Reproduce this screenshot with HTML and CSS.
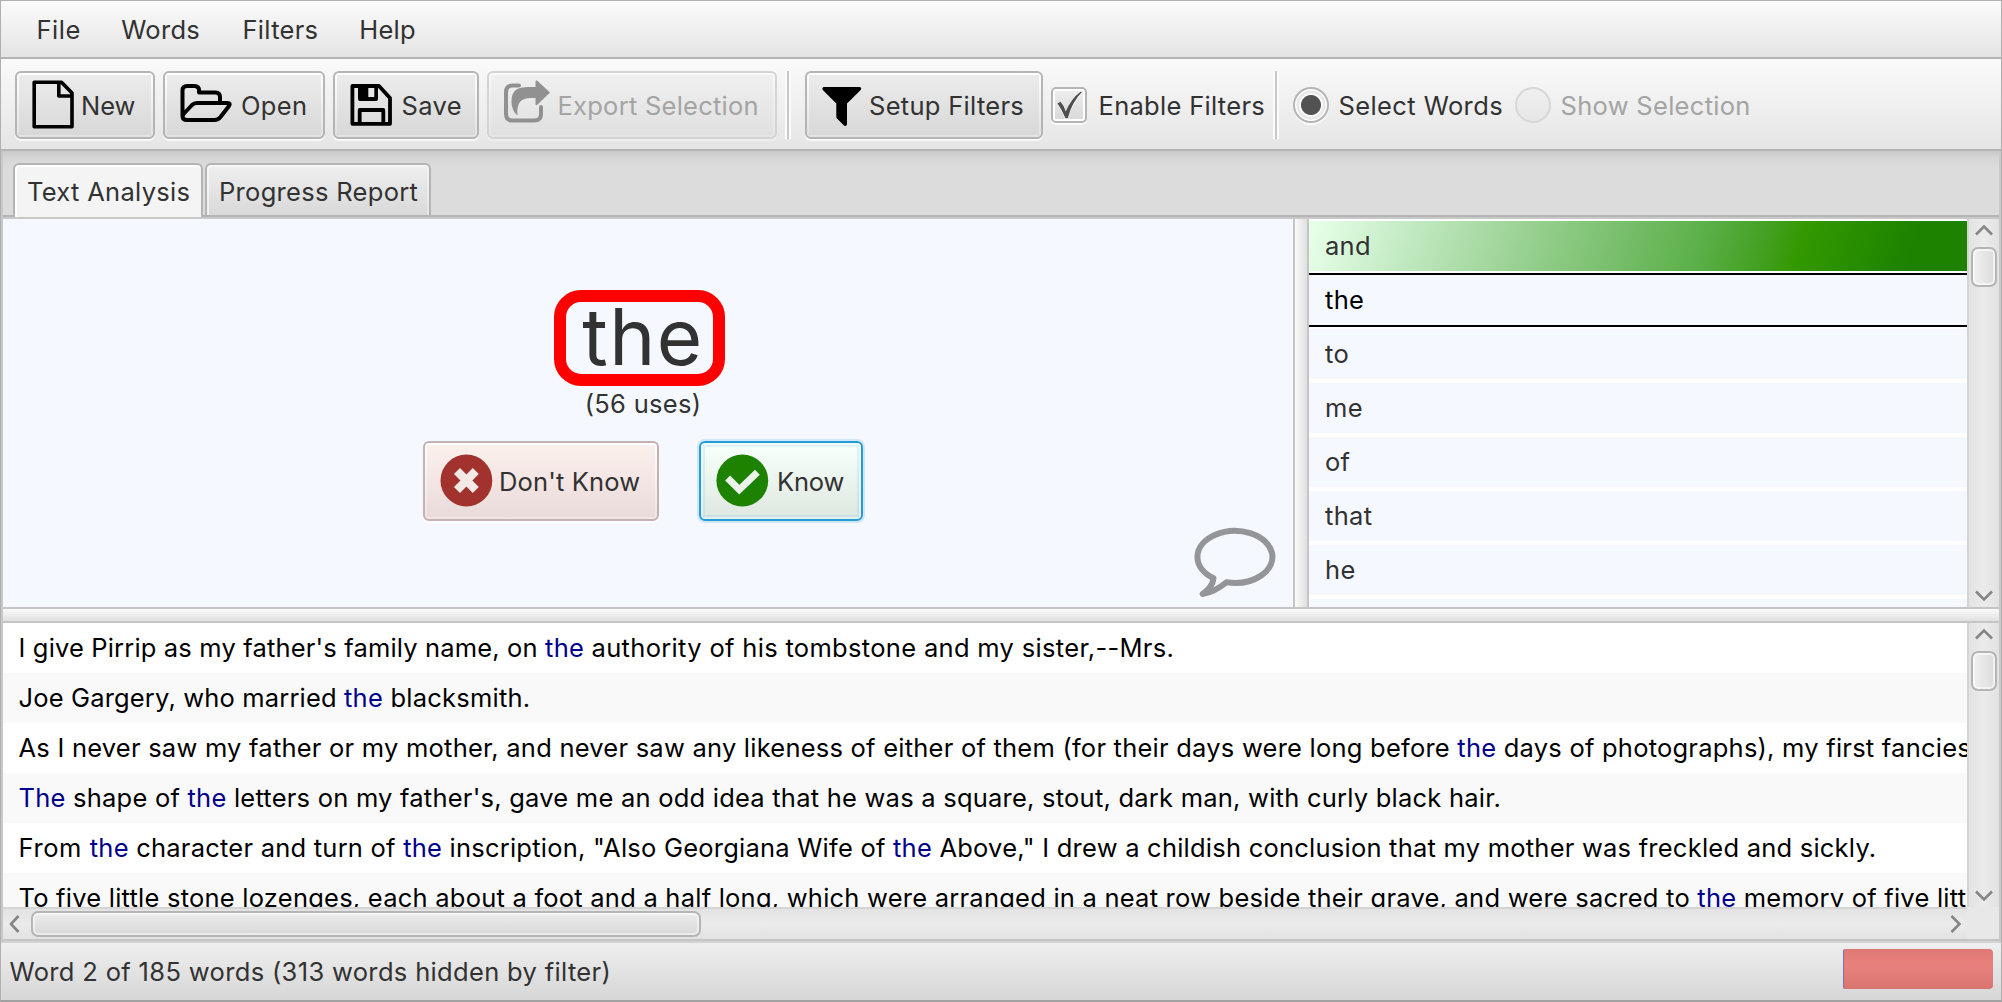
FILE: index.html
```
<!DOCTYPE html>
<html lang="en">
<head>
<meta charset="utf-8">
<title>Text Analysis</title>
<link rel="stylesheet" href="styles.css">
</head>
<body>
<div class="window">
  <nav class="menubar">
    <span class="file">File</span><span>Words</span><span>Filters</span><span>Help</span>
  </nav>

  <div class="toolbar">
    <div class="btn new">
      <svg width="49" height="64" viewBox="0 2 49 64" fill="none" stroke="#000" stroke-width="3.6" stroke-linejoin="round"><path d="M2.2 11.2H29.5L40 22V55.8H2.2Z M26.8 11.2V25H40"/></svg>
      <span>New</span>
    </div>
    <div class="btn open">
      <svg width="61" height="64" viewBox="0 2 61 64" fill="none" stroke="#000" stroke-width="4" stroke-linejoin="round"><path d="M2.5 45V19.5Q2.5 15 7 15H14.5Q19 15 19 19.5V21.5H35.5Q40 21.5 40 26V32M17 32H47.5Q51 32 49 35L40.5 46Q38 49 34.5 49H7Q2.5 49 2.5 45Q3 44 4 42.5L12 34Q14 32 17 32Z"/></svg>
      <span>Open</span>
    </div>
    <div class="btn save">
      <svg width="51.5" height="64" viewBox="0 2 51.5 64" fill="none" stroke="#000" stroke-width="3.8" stroke-linejoin="round"><path d="M2.4 15H29L40 27V52.8H2.4Z"/><path d="M9.7 52V39H33.3V52"/><path d="M8 14H28V28Q28 30 26 30H10Q8 30 8 28ZM18.3 16.5V26H24.3V16.5Z" fill="#000" stroke="none" fill-rule="evenodd"/></svg>
      <span>Save</span>
    </div>
    <div class="btn export disabled">
      <svg width="53.5" height="64" viewBox="0 2 53.5 64"><path d="M15 14.5H8.5Q2 14.5 2 21V43Q2 49.5 8.5 49.5H30.5Q37 49.5 37 43V36" fill="none" stroke="#919191" stroke-width="4" stroke-linecap="round"/><path d="M33 9.5L46 21.5L33 34Q31.5 34.5 31.5 33V27H27C16.5 27 12.5 32 13.5 44.5C9 41 7.5 35 7.5 30C7.5 19 14 16 24 16H31.5V10.5Q32 9 33 9.5Z" fill="#919191"/></svg>
      <span>Export Selection</span>
    </div>
    <i class="sep sep-a"></i>
    <div class="btn setup">
      <svg width="47" height="64" viewBox="0 2 47 64"><path d="M1.5 16H38Q40 17 38.7 19L25 32.5V53Q24.5 56 22 54.5L15 47.5Q14.3 46.8 14.3 45.5V32.5L.8 19Q-.3 17 1.5 16Z"/></svg>
      <span>Setup Filters</span>
    </div>
    <div class="check">
      <i class="box"><svg width="32" height="32" viewBox="2 2 32 32"><path d="M6.5 16.5L9.5 14.8Q12.5 18 14.8 24.5Q20 12 29.5 4.800L31 5Q21 15 16.8 31.2H14.5Q11 23 6.5 16.5Z" fill="#fff" transform="translate(0 1.5)"/><path d="M6.5 16.5L9.5 14.8Q12.5 18 14.8 24.5Q20 12 29.5 4.800L31 5Q21 15 16.8 31.2H14.5Q11 23 6.5 16.5Z" fill="#4f4f4f"/></svg></i>
      <span>Enable Filters</span>
    </div>
    <i class="sep sep-b"></i>
    <div class="radio"><i class="dot on"></i><span>Select Words</span></div>
    <div class="radio second"><i class="dot off"></i><span>Show Selection</span></div>
  </div>

  <main class="tabpane">
    <div class="tabs">
      <div class="tab active">Text Analysis</div>
      <div class="tab">Progress Report</div>
    </div>

    <div class="upper">
      <section class="quiz">
        <div class="word">the<i class="mark"></i></div>
        <div class="uses">(56 uses)</div>
        <div class="answers">
          <div class="btn no">
            <svg width="59" height="76" viewBox="0 2 59 76"><circle cx="26.4" cy="39.5" r="25.9" fill="#a1322d"/><path d="M17 30.1L35.8 48.9M35.8 30.1L17 48.9" stroke="#f5e9e7" stroke-width="8.5"/></svg>
            <span>Don't Know</span>
          </div>
          <div class="btn yes">
            <svg width="61" height="76" viewBox="0 2 61 76"><circle cx="26.3" cy="39.5" r="25.9" fill="#1c8200"/><path d="M11.6 37L23.3 48.7L41.4 31.3" fill="none" stroke="#ecf3ed" stroke-width="7"/></svg>
            <span>Know</span>
          </div>
        </div>
        <svg class="bubble" width="82" height="71" viewBox="0 0 82 71" fill="none" stroke="#939599" stroke-width="6" stroke-linejoin="round"><path d="M32.5 55.3A37.5 26 0 1 0 19.5 51.3Q18.5 60 8.7 67Q20 65.5 32.5 55.3Z"/></svg>
      </section>
      <i class="vsplit"></i>
      <ul class="words">
        <li class="known">and</li>
        <li class="current">the</li>
        <li>to</li>
        <li>me</li>
        <li>of</li>
        <li>that</li>
        <li>he</li>
        <li></li>
      </ul>
      <div class="vscroll">
        <svg width="30" height="28" viewBox="0 0 30 28"><path d="M7 15.5L15 7.5L23 15.5"/></svg>
        <i class="thumb"></i>
        <svg width="30" height="28" viewBox="0 0 30 28"><path d="M7 12.5L15 20.5L23 12.5"/></svg>
      </div>
    </div>

    <i class="hsplit"></i>

    <div class="lower">
      <div class="lines">
        <p><span class="tight">I give Pirrip as my father's family name, on </span><b>the</b><span class="loose"> authority of his tombstone and my sister,--Mrs.</span></p>
        <p><span class="tight">Joe Gargery, who married </span><b>the</b> blacksmith.</p>
        <p>As I never saw my father or my mother, and never saw any likeness of either of them (for their days were long before <b>the</b> days of photographs), my first fancies</p>
        <p><b>The</b> shape of <b>the</b> letters on my father's, gave me an odd idea that he was a square, stout, dark man, with curly black hair.</p>
        <p><span class="wide">From </span><b>the</b> character and turn of <b>the</b> inscription, "Also Georgiana Wife of <b>the</b> Above," I drew a childish conclusion that my mother was freckled and sickly.</p>
        <p>To five little stone lozenges, each about a foot and a half long, which were arranged in a neat row beside their grave, and were sacred to <b>the</b> memory of five litt</p>
      </div>
      <div class="vscroll">
        <svg width="30" height="28" viewBox="0 0 30 28"><path d="M7 15.5L15 7.5L23 15.5"/></svg>
        <i class="thumb"></i>
        <svg width="30" height="28" viewBox="0 0 30 28"><path d="M7 12.5L15 20.5L23 12.5"/></svg>
      </div>
      <div class="hscroll">
        <svg width="28" height="30" viewBox="0 0 28 30"><path d="M15.5 7L8 15L15.5 23"/></svg>
        <i class="bar"></i>
        <svg width="28" height="30" viewBox="0 0 28 30"><path d="M12.5 7L20.5 15L12.5 23"/></svg>
      </div>
      <i class="corner"></i>
    </div>
  </main>

  <footer class="status">
    <span>Word 2 of 185 words (313 words hidden by filter)</span>
    <i class="meter"></i>
  </footer>
</div>
</body>
</html>
```
FILE: styles.css
```
* { box-sizing: border-box; }
body {
  margin: 0;
  font-family: Inter, "Liberation Sans", sans-serif;
  font-size: 25.5px;
  letter-spacing: 0.3px;
  color: #323232;
}
i { display: block; flex: none; }
svg { display: block; flex: none; }
.window {
  width: 2002px;
  height: 1002px;
  border: 1px solid #b0b0b0;
  border-bottom: 2px solid #a2a2a2;
  display: flex;
  flex-direction: column;
  overflow: hidden;
  background: #dcdcdc;
  white-space: nowrap;
}

/* menu bar */
.menubar {
  height: 58px;
  padding-left: 35.5px;
  border-bottom: 2px solid #b4b4b4;
  background: linear-gradient(#fbfbfb, #e4e4e4);
  display: grid;
  grid-template-columns: 84.7px 121.3px 116.7px auto;
  align-items: center;
}
.file { letter-spacing: 0.5px; }

/* tool bar */
.toolbar {
  height: 92px;
  padding: 2px 0 0 14px;
  border-bottom: 2px solid #b4b4b4;
  background: linear-gradient(#fafafa, #e5e5e5);
  display: flex;
  align-items: center;
}
.btn {
  flex: none;
  height: 68px;
  padding-left: 15px;
  border: 2px solid #b5b5b5;
  border-radius: 6px;
  display: flex;
  align-items: center;
  background:
    linear-gradient(#ececec, #d8d8d8) 2px 2px / calc(100% - 4px) calc(100% - 4px) no-repeat,
    linear-gradient(#fff, #e2e2e2);
  box-shadow: 0 2px 0 rgba(255, 255, 255, 0.75);
}
.new { width: 140px; letter-spacing: 0; }
.open { width: 162px; margin-left: 8px; }
.save { width: 146px; margin-left: 8px; letter-spacing: 0.4px; }
.export { width: 290px; margin-left: 8px; letter-spacing: 0.25px; }
.setup { width: 238px; margin-left: 14px; }
.disabled {
  color: #a4a4a4;
  border-color: #d4d4d4;
  background:
    linear-gradient(#f0f0f0, #e0e0e0) 2px 2px / calc(100% - 4px) calc(100% - 4px) no-repeat,
    linear-gradient(#f9f9f9, #e5e5e5);
  box-shadow: 0 2px 0 rgba(255, 255, 255, 0.3);
}
.sep {
  width: 6px;
  height: 68px;
  border: solid #fbfbfb;
  border-width: 0 2px;
  background: #c8c8c8;
}
.sep-a { margin-left: 8px; }
.check {
  width: 222px;
  margin-left: 8px;
  display: flex;
  align-items: center;
  gap: 11.5px;
}
.check .box {
  width: 36px;
  height: 36px;
  border: 2px solid #b5b5b5;
  border-radius: 5px;
  background:
    linear-gradient(#ececec, #dadada) 2px 2px / calc(100% - 4px) calc(100% - 4px) no-repeat,
    #fff;
  box-shadow: 0 2px 0 rgba(255, 255, 255, 0.75);
}
.radio {
  width: 222px;
  margin-left: 14px;
  display: flex;
  align-items: center;
  gap: 9.5px;
  letter-spacing: 0.4px;
}
.radio.second { margin-left: 0; color: #a4a4a4; letter-spacing: 0.3px; }
.dot {
  width: 36px;
  height: 36px;
  border: 2px solid #b5b5b5;
  border-radius: 50%;
}
.dot.on {
  background: radial-gradient(circle, #525252 9.5px, #fff 10.5px, #efefef 12px, #e4e4e4 14px, #fff 15px);
  box-shadow: 0 2px 0 rgba(255, 255, 255, 0.75);
}
.dot.off { border-color: #d8d8d8; background: linear-gradient(#f0f0f0, #e6e6e6); }

/* tabs */
.tabpane {
  height: 792px;
  border: 2px solid #c8c8c8;
  border-top: 0;
  border-bottom: 2px solid #d2d2d2;
}
.tabs {
  height: 68px;
  padding: 12px 0 0 10px;
  display: flex;
  gap: 2px;
  background:
    linear-gradient(#c8c8c8, #c8c8c8) 0 100% / 100% 2px no-repeat,
    linear-gradient(#b4b4b4, #b4b4b4) 0 64px / 100% 2px no-repeat,
    linear-gradient(#c9c9c9, #d6d6d6 7px, #dcdcdc 16px);
}
.tab {
  height: 52px;
  width: 226px;
  padding-left: 12px;
  border: 2px solid #b4b4b4;
  border-bottom: 0;
  border-radius: 6px 6px 0 0;
  line-height: 54px;
  background: linear-gradient(#efefef, #d9d9d9);
  box-shadow: inset 2px 2px 0 rgba(255, 255, 255, 0.55), inset -2px 0 0 rgba(255, 255, 255, 0.3);
}
.tab.active {
  width: 190px;
  height: 54px;
  background: #f4f4f4;
  box-shadow: inset 2px 2px 0 #fff;
}

/* word quiz and word list */
.upper { height: 388px; display: flex; overflow: hidden; }
.quiz {
  position: relative;
  width: 1290px;
  flex: none;
  padding: 71px 10px 0 0;
  display: flex;
  flex-direction: column;
  align-items: center;
  background: #f5f8ff;
}
.word {
  position: relative;
  height: 96px;
  line-height: 94px;
  font-size: 78px;
  letter-spacing: 1.5px;
}
.mark {
  position: absolute;
  left: -28px;
  top: 0;
  width: 171px;
  height: 96px;
  border: 12px solid #f00;
  border-radius: 27px;
}
.uses { height: 55px; line-height: 36px; }
.answers { display: flex; gap: 40px; }
.answers .btn { height: 80px; }
.no {
  width: 236px;
  letter-spacing: 0.15px;
  border-color: #c2b3b2;
  background:
    linear-gradient(#fcf0ed, #e9dbda) 2px 2px / calc(100% - 4px) calc(100% - 4px) no-repeat,
    linear-gradient(#fff, #f0e4e3);
}
.yes {
  width: 164px;
  letter-spacing: -0.2px;
  border-color: #239cd8;
  background:
    linear-gradient(#f7fffa, #dfe8e1) 4px 4px / calc(100% - 8px) calc(100% - 8px) no-repeat,
    linear-gradient(#dff2f8, #cbe0e2) 2px 2px / calc(100% - 4px) calc(100% - 4px) no-repeat,
    linear-gradient(#f0fbfc, #e0eff0);
  box-shadow: 0 0 0 2px #cfe8f7;
}
.bubble { position: absolute; left: 1191px; top: 308px; }
.vsplit {
  width: 16px;
  border: solid #c5c5c5;
  border-width: 0 2px;
  background: linear-gradient(90deg, #fafafa, #e0e0e0);
}
.words {
  width: 658px;
  margin: 0;
  padding: 0;
  list-style: none;
  background: #fff;
}
.words li {
  height: 54px;
  padding-left: 16px;
  line-height: 50px;
  border: solid #fff;
  border-width: 2px 0;
  background: #f5f8ff;
}
.words .known {
  background: linear-gradient(108deg, #e6ffe8 1%, #bce6bb 18%, #86c67c 41%, #5cb04a 59%, #429f20 69%, #339900 74%, #1c8200 91%) padding-box;
}
.words .current { border-color: #000; color: #000; }

/* scroll bars */
.vscroll {
  width: 32px;
  border-left: 2px solid #d4d4d4;
  background: linear-gradient(90deg, #e3e3e3, #ebebeb 50%, #e2e2e2);
  display: grid;
  grid-template-rows: 28px 1fr 28px;
  justify-items: center;
}
.vscroll svg, .hscroll svg { fill: none; stroke: #858585; stroke-width: 2.6; }
.thumb {
  width: 26px;
  height: 40px;
  border: 2px solid #b5b5b5;
  border-radius: 7px;
  background: linear-gradient(90deg, #f0f0f0, #dcdcdc);
  box-shadow: inset 0 0 0 2px rgba(255, 255, 255, 0.6);
}
.hsplit {
  height: 16px;
  border: solid #c5c5c5;
  border-width: 2px 0;
  background: linear-gradient(#fafafa, #e0e0e0);
}
.lower {
  height: 318px;
  display: grid;
  grid-template: 284px 32px / 1964px 32px;
  border-bottom: 2px solid #c5c5c5;
}
.lines { overflow: hidden; background: #fff; color: #000; letter-spacing: 0.23px; }
.lines p { margin: 0; height: 50px; line-height: 50px; padding-left: 15.5px; }
.lines p:nth-child(even) { background: #f9f9f9; }
.lines b { font-weight: 400; color: #00008b; }
.lines .tight { letter-spacing: 0.16px; }
.lines .loose { letter-spacing: 0.32px; }
.lines .wide { letter-spacing: 0.6px; }
.hscroll {
  border-top: 2px solid #d4d4d4;
  background: linear-gradient(#e3e3e3, #ebebeb 50%, #e2e2e2);
  display: grid;
  grid-template-columns: 28px 1fr 28px;
  align-items: center;
}
.bar {
  width: 670px;
  height: 26px;
  border: 2px solid #b5b5b5;
  border-radius: 7px;
  background: linear-gradient(#ececec, #d8d8d8);
  box-shadow: inset 0 0 0 2px rgba(255, 255, 255, 0.5);
}
.corner { background: #e8e8e8; }

/* status bar */
.status {
  flex: 1;
  padding: 0 8px 0 8.5px;
  display: flex;
  justify-content: space-between;
  background: linear-gradient(#efefef, #d6d6d6);
  line-height: 57px;
  letter-spacing: 0.34px;
}
.meter {
  width: 150px;
  height: 40px;
  margin-top: 6px;
  border-left: 1px solid #7a70b8;
  border-radius: 2px 4px 4px 2px;
  background: linear-gradient(#dd7975, #e8807c 35%, #e6807c 50%, #d87470);
}
```
